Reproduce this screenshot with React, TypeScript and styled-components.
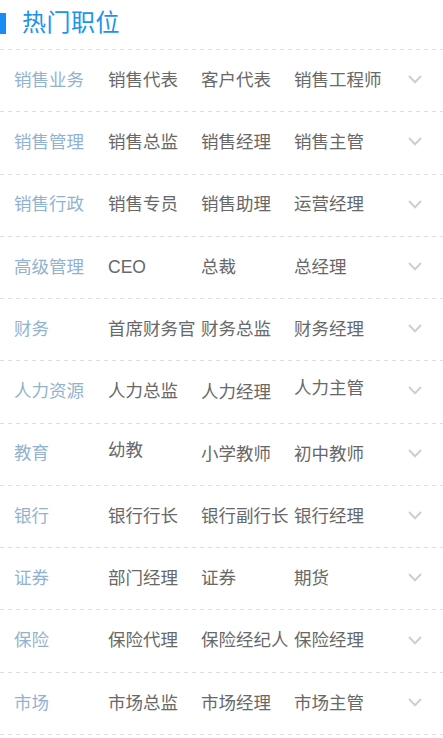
import React from "react";
import styled, { createGlobalStyle } from "styled-components";

const GlobalStyle = createGlobalStyle`
  html, body {
    margin: 0;
    padding: 0;
    background: #ffffff;
  }
  body {
    font-family: "Liberation Sans", "Noto Sans CJK SC", sans-serif;
  }
`;

const dashed = `
  background-image: linear-gradient(to right, #dedede 50%, transparent 50%);
  background-size: 8px 1px;
  background-repeat: repeat-x;
  background-position: left bottom;
`;

const Page = styled.div`
  width: 443px;
  background: #fff;
`;

const Header = styled.div`
  height: 50px;
  display: flex;
  align-items: center;
  box-sizing: border-box;
  padding-bottom: 4px;
  ${dashed}
`;

const Bar = styled.span`
  width: 6px;
  height: 21px;
  background: #1a8cf5;
`;

const Title = styled.h1`
  margin: 0 0 0 16px;
  font-size: 24px;
  font-weight: 400;
  line-height: 1;
  color: #1b94ee;
  letter-spacing: 0.5px;
`;

const Row = styled.div`
  height: 62.27px;
  box-sizing: border-box;
  display: flex;
  align-items: center;
  padding-bottom: 1px;
  ${dashed}
`;

const Category = styled.div`
  width: 108px;
  flex-shrink: 0;
  padding-left: 14px;
  box-sizing: border-box;
  font-size: 17.5px;
  line-height: 1;
  color: #92b3cf;
  white-space: nowrap;
`;

const Item = styled.div<{ $shift?: number }>`
  width: 93px;
  flex-shrink: 0;
  font-size: 17.5px;
  line-height: 1;
  color: #686868;
  white-space: nowrap;
  transform: translateY(${(p) => p.$shift ?? 0}px);
`;

const Chevron = styled.svg`
  margin-left: auto;
  margin-right: 21px;
  width: 14px;
  height: 9px;
  flex-shrink: 0;
  transform: translateY(-1px);
`;

type Entry = { text: string; shift?: number };
type Group = { name: string; items: Entry[] };

const groups: Group[] = [
  { name: "销售业务", items: [{ text: "销售代表" }, { text: "客户代表" }, { text: "销售工程师" }] },
  { name: "销售管理", items: [{ text: "销售总监" }, { text: "销售经理" }, { text: "销售主管" }] },
  { name: "销售行政", items: [{ text: "销售专员" }, { text: "销售助理" }, { text: "运营经理" }] },
  { name: "高级管理", items: [{ text: "CEO" }, { text: "总裁" }, { text: "总经理" }] },
  { name: "财务", items: [{ text: "首席财务官" }, { text: "财务总监" }, { text: "财务经理" }] },
  {
    name: "人力资源",
    items: [{ text: "人力总监" }, { text: "人力经理", shift: 1 }, { text: "人力主管", shift: -3 }],
  },
  {
    name: "教育",
    items: [{ text: "幼教", shift: -3 }, { text: "小学教师", shift: 1 }, { text: "初中教师", shift: 1 }],
  },
  { name: "银行", items: [{ text: "银行行长" }, { text: "银行副行长" }, { text: "银行经理" }] },
  { name: "证券", items: [{ text: "部门经理" }, { text: "证券" }, { text: "期货" }] },
  { name: "保险", items: [{ text: "保险代理" }, { text: "保险经纪人" }, { text: "保险经理" }] },
  { name: "市场", items: [{ text: "市场总监" }, { text: "市场经理" }, { text: "市场主管" }] },
];

export default function App() {
  return (
    <Page>
      <GlobalStyle />
      <Header>
        <Bar />
        <Title>热门职位</Title>
      </Header>
      {groups.map((g) => (
        <Row key={g.name}>
          <Category>{g.name}</Category>
          {g.items.map((it) => (
            <Item key={it.text} $shift={it.shift}>
              {it.text}
            </Item>
          ))}
          <Chevron viewBox="0 0 14 9">
            <polyline points="1,1 7,7.2 13,1" fill="none" stroke="#cfcfcf" strokeWidth="2" />
          </Chevron>
        </Row>
      ))}
    </Page>
  );
}
